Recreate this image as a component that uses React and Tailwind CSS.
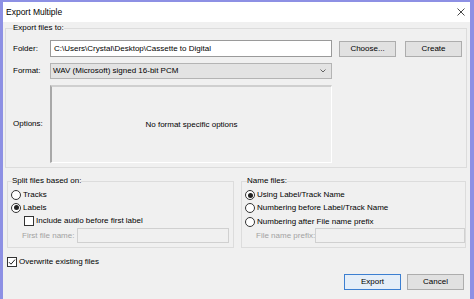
import React from "react";

function Radio({ checked }) {
  return (
    <span className="flex h-[10px] w-[10px] shrink-0 items-center justify-center rounded-full border border-[#333] bg-white">
      {checked && <span className="h-[5px] w-[5px] rounded-full bg-[#222]" />}
    </span>
  );
}

function Checkbox({ checked }) {
  return (
    <span className="flex h-[10px] w-[10px] shrink-0 items-center justify-center border border-[#333] bg-white">
      {checked && (
        <svg width="8" height="8" viewBox="0 0 8 8">
          <path d="M1 4.2 L3 6.2 L7 1.6" fill="none" stroke="#222" strokeWidth="1" />
        </svg>
      )}
    </span>
  );
}

function Button({ children, primary, className = "" }) {
  return (
    <div
      className={`flex h-[16px] w-[57px] items-center justify-center border ${
        primary ? "border-[#3c7fd1] bg-[#e5eef8]" : "border-[#adadad] bg-[#e1e1e1]"
      } ${className}`}
    >
      {children}
    </div>
  );
}

export default function App() {
  return (
    <div
      className="h-[299px] w-[474px] overflow-hidden bg-[#8d90e4] pl-[3px] pr-[4px] pt-[2px] text-[8px] leading-[10px] text-black"
      style={{ fontFamily: '"Liberation Sans", Arial, sans-serif' }}
    >
      <div className="flex h-full flex-col bg-[#f0f0f0]">
        {/* title bar */}
        <div className="flex h-[20px] items-center justify-between bg-white pl-[3px] pr-[5px]">
          <span className="text-[8.5px]">Export Multiple</span>
          <svg width="8" height="8" viewBox="0 0 8 8">
            <path d="M0.5 0.5 L7.5 7.5 M7.5 0.5 L0.5 7.5" stroke="#333" strokeWidth="0.9" />
          </svg>
        </div>

        <div className="flex flex-col pl-[2px] pr-[3px]">
          {/* export files to */}
          <fieldset className="mt-[1px] border border-[#dcdcdc] pb-[4px] pl-[7px] pr-[4px]">
            <legend className="px-0">Export files to:</legend>
            <div className="mt-[7px] flex items-center">
              <span className="w-[37px]">Folder:</span>
              <div className="flex h-[17px] w-[282px] items-center border border-[#9a9a9a] bg-white pl-[3px]">
                C:\Users\Crystal\Desktop\Cassette to Digital
              </div>
              <Button className="ml-[7px]">Choose...</Button>
              <Button className="ml-[9px]">Create</Button>
            </div>
            <div className="mt-[6px] flex items-center">
              <span className="w-[37px]">Format:</span>
              <div className="flex h-[16px] w-[282px] items-center justify-between border border-[#b4b4b4] bg-[#e3e3e3] pl-[2px] pr-[5px]">
                <span>WAV (Microsoft) signed 16-bit PCM</span>
                <svg width="6" height="4" viewBox="0 0 6 4">
                  <path d="M0.5 0.5 L3 3 L5.5 0.5" fill="none" stroke="#555" strokeWidth="0.9" />
                </svg>
              </div>
            </div>
            <div className="mt-[6px] flex items-center">
              <span className="w-[37px]">Options:</span>
              <div className="flex h-[78px] w-[282px] items-center justify-center border-l-2 border-t-2 border-r border-b border-l-[#a8a8a8] border-t-[#cfcfcf] border-r-white border-b-white">
                No format specific options
              </div>
            </div>
          </fieldset>

          {/* split / name groups */}
          <div className="mt-[8px] flex pl-[2px]">
            <fieldset className="h-[72px] w-[227px] border border-[#dcdcdc] pl-[3px] pr-[4px]">
              <legend className="ml-[1px] px-0">Split files based on:</legend>
              <div className="mt-[3px] flex h-[12px] items-center gap-[2px]">
                <Radio />
                <span>Tracks</span>
              </div>
              <div className="flex h-[13px] items-center gap-[2px]">
                <Radio checked />
                <span>Labels</span>
              </div>
              <div className="flex h-[13px] items-center gap-[2px] pl-[13px]">
                <Checkbox />
                <span>Include audio before first label</span>
              </div>
              <div className="mt-[1px] flex items-center pl-[11px]">
                <span className="w-[55px] whitespace-nowrap text-[#a2a2a2]">First file name:</span>
                <div className="h-[15px] flex-1 border border-[#d0d0d0]" />
              </div>
            </fieldset>

            <fieldset className="ml-[7px] h-[72px] w-[225px] border border-[#dcdcdc] pl-[3px]">
              <legend className="ml-[2px] px-0">Name files:</legend>
              <div className="mt-[3px] flex h-[12px] items-center gap-[2px]">
                <Radio checked />
                <span>Using Label/Track Name</span>
              </div>
              <div className="flex h-[14px] items-center gap-[2px]">
                <Radio />
                <span>Numbering before Label/Track Name</span>
              </div>
              <div className="flex h-[13px] items-center gap-[2px]">
                <Radio />
                <span>Numbering after File name prefix</span>
              </div>
              <div className="flex items-center pl-[11px]">
                <span className="w-[59px] whitespace-nowrap text-[#a2a2a2]">File name prefix:</span>
                <div className="h-[15px] flex-1 border border-[#d0d0d0]" />
              </div>
            </fieldset>
          </div>

          <div className="mt-[8px] flex h-[12px] items-center gap-[2px] pl-[2px]">
            <Checkbox checked />
            <span>Overwrite existing files</span>
          </div>

          <div className="mt-[6px] flex justify-end gap-[6px] pr-[3px]">
            <Button primary>Export</Button>
            <Button>Cancel</Button>
          </div>
        </div>
      </div>
    </div>
  );
}
